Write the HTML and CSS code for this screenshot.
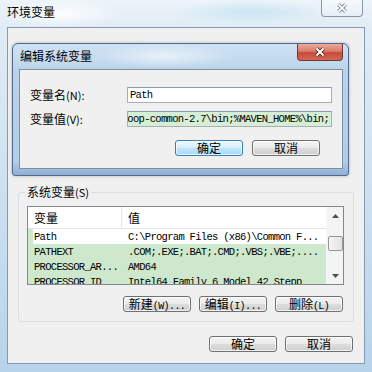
FILE: index.html
```html
<!DOCTYPE html>
<html lang="zh-CN">
<head>
    <meta charset="UTF-8">
    <title>环境变量</title>
    <link rel="stylesheet" href="styles.css">
</head>
<body>
<div class="win">
    <div class="win-bar">
        <span class="win-title">环境变量</span>
        <span class="close ghost">
            <svg width="12" height="10" viewBox="0 0 12 10"><path d="M2.5 1.5 L9.5 8.5 M9.5 1.5 L2.5 8.5" stroke="#6f7c8c" stroke-width="3.4"/><path d="M2.5 1.5 L9.5 8.5 M9.5 1.5 L2.5 8.5" stroke="#f6f8fa" stroke-width="1.8"/></svg>
        </span>
    </div>
    <div class="win-client">
        <!-- 编辑系统变量 -->
        <div class="dlg">
            <div class="dlg-bar">
                <span class="dlg-title">编辑系统变量</span>
                <span class="close red">
                    <svg width="12" height="10" viewBox="0 0 12 10"><path d="M2.5 1.5 L9.5 8.5 M9.5 1.5 L2.5 8.5" stroke="#4a1e19" stroke-width="3.6"/><path d="M2.5 1.5 L9.5 8.5 M9.5 1.5 L2.5 8.5" stroke="#fff" stroke-width="2"/></svg>
                </span>
            </div>
            <div class="dlg-client">
                <div class="field">
                    <span class="field-label">变量名<span class="acc">(N):</span></span>
                    <div class="edit"><span class="mono">Path</span></div>
                </div>
                <div class="field">
                    <span class="field-label">变量值<span class="acc">(V):</span></span>
                    <div class="edit sel"><span class="mono">oop-common-2.7\bin;%MAVEN_HOME%\bin;</span></div>
                </div>
                <div class="btns dlg-btns">
                    <button class="btn focus">确定</button>
                    <button class="btn">取消</button>
                </div>
            </div>
        </div>

        <!-- 系统变量 -->
        <div class="group">
            <span class="legend">系统变量<span class="acc">(S)</span></span>
            <div class="list">
                <div class="list-main">
                    <div class="list-head">
                        <span class="c1">变量</span>
                        <span class="c2">值</span>
                    </div>
                    <div class="row first"><span class="c1 mono">Path</span><span class="c2 mono">C:\Program Files (x86)\Common F...</span></div>
                    <div class="row"><span class="c1 mono">PATHEXT</span><span class="c2 mono">.COM;.EXE;.BAT;.CMD;.VBS;.VBE;....</span></div>
                    <div class="row"><span class="c1 mono">PROCESSOR_AR...</span><span class="c2 mono">AMD64</span></div>
                    <div class="row"><span class="c1 mono">PROCESSOR_ID</span><span class="c2 mono">Intel64 Family 6 Model 42 Stepp</span></div>
                </div>
                <div class="vscroll">
                    <span class="arrow"><svg width="7" height="4" viewBox="0 0 7 4"><path d="M0 4 L3.5 0 L7 4 Z" fill="#4d4d4d"/></svg></span>
                    <span class="thumb"></span>
                    <span class="arrow down"><svg width="7" height="4" viewBox="0 0 7 4"><path d="M0 0 L3.5 4 L7 0 Z" fill="#4d4d4d"/></svg></span>
                </div>
            </div>
            <div class="btns group-btns">
                <button class="btn">新建<span class="acc mono">(W)...</span></button>
                <button class="btn">编辑<span class="acc mono">(I)...</span></button>
                <button class="btn">删除<span class="acc mono">(L)</span></button>
            </div>
        </div>

        <div class="btns win-btns">
            <button class="btn">确定</button>
            <button class="btn">取消</button>
        </div>
    </div>
</div>
</body>
</html>
```

FILE: styles.css
```css
* {
    margin: 0;
    padding: 0;
    box-sizing: border-box;
}

body {
    width: 372px;
    height: 372px;
    overflow: hidden;
    font: 12px "Noto Sans CJK SC", sans-serif;
    color: #000;
    background: #d3e5f2;
}

.mono {
    font-family: "Liberation Mono", monospace;
    font-size: 10.5px;
    letter-spacing: -0.7px;
}

/* 外层窗口 */
.win {
    width: 372px;
    height: 372px;
    display: flex;
    flex-direction: column;
    padding: 0 7px 8px 7px;
    background:
        radial-gradient(ellipse 60px 14px at 60px 14px, rgba(255, 255, 255, 0.9), rgba(255, 255, 255, 0)),
        radial-gradient(ellipse 80px 12px at 250px 12px, rgba(190, 225, 240, 0.7), rgba(255, 255, 255, 0)),
        linear-gradient(180deg, #eef4f9 0, #e0ecf5 27px, #c9def0 60%, #b7d3ea 100%);
}

.win-bar {
    height: 27px;
    display: flex;
    justify-content: space-between;
    align-items: flex-start;
}

.win-title {
    padding-top: 4px;
    line-height: 16px;
    font-size: 12px;
}

.close {
    display: flex;
    align-items: center;
    justify-content: center;
    border-radius: 0 0 4px 4px;
}

.close.ghost {
    width: 42px;
    height: 17px;
    margin-right: 2px;
    border: 1px solid #8796a8;
    border-top: none;
    background: linear-gradient(180deg, rgba(255, 255, 255, 0.5), rgba(230, 238, 245, 0.6));
}

.close.red {
    width: 46px;
    height: 17px;
    border: 1px solid #6f3a33;
    border-top: none;
    background: linear-gradient(180deg, #eba99d 0, #dc7b6c 45%, #c9483a 55%, #d26a55 100%);
}

.win-client {
    flex: 1;
    border: 1px solid #8699ae;
    background: #f0f0f0;
    display: flex;
    flex-direction: column;
}

/* 编辑系统变量 */
.dlg {
    width: 337px;
    height: 133px;
    margin: 15px 0 0 4px;
    border: 1px solid #52698a;
    border-radius: 6px 6px 3px 3px;
    padding: 0 5px 6px 6px;
    display: flex;
    flex-direction: column;
    background:
        radial-gradient(ellipse 70px 12px at 150px 12px, rgba(235, 243, 250, 0.9), rgba(255, 255, 255, 0)),
        linear-gradient(180deg, #cfe2f3 0, #b9d2ea 30px, #b3cde6 90%, #8fb0d2 100%);
    box-shadow: 0 0 3px rgba(40, 60, 90, 0.35);
}

.dlg-bar {
    height: 25px;
    display: flex;
    justify-content: space-between;
    align-items: flex-start;
}

.dlg-title {
    padding: 4px 0 0 1px;
    line-height: 16px;
}

.dlg-client {
    height: 100px;
    border: 1px solid #7c90a7;
    background: #f0f0f0;
    padding: 17px 10px 0 10px;
    display: flex;
    flex-direction: column;
    gap: 8px;
}

.field {
    display: flex;
    align-items: center;
    height: 16px;
}

.field-label {
    width: 97px;
    line-height: 16px;
    white-space: nowrap;
}

.acc {
    font-size: 11px;
}

.edit {
    width: 205px;
    height: 16px;
    border: 1px solid #abadb3;
    border-top-color: #8e9aa6;
    background: #fff;
    overflow: hidden;
    white-space: nowrap;
    display: flex;
    align-items: center;
    padding: 0 2px;
    line-height: 14px;
}

.edit.sel {
    justify-content: flex-end;
    background: #d5eed6;
}

/* 按钮 */
.btns {
    display: flex;
    justify-content: flex-end;
}

.btn {
    width: 68px;
    height: 16px;
    border: 1px solid #707070;
    border-radius: 3px;
    background: linear-gradient(180deg, #f3f3f3 0, #ebebeb 50%, #dddddd 50%, #cfcfcf 100%);
    font: 12px "Noto Sans CJK SC", sans-serif;
    line-height: 14px;
    color: #000;
    box-shadow: inset 0 0 0 1px rgba(255, 255, 255, 0.7);
}

.btn .acc {
    font-size: 10px;
    letter-spacing: -0.6px;
}

.btn.focus {
    border-color: #3c7fb1;
    background: linear-gradient(180deg, #eaf6fd 0, #d9f0fc 50%, #bee6fd 50%, #a7d9f5 100%);
}

.dlg-btns {
    margin-top: 5px;
    padding-right: 12px;
    gap: 9px;
}

/* 系统变量 */
.group {
    position: relative;
    margin: 16px 10px 0 10px;
    border: 1px solid #d5dfe5;
    border-radius: 3px;
    padding: 13px 9px 9px 8px;
}

.legend {
    position: absolute;
    top: -9px;
    left: 6px;
    padding: 0 2px 0 2px;
    background: #f0f0f0;
    line-height: 16px;
}

.list {
    height: 79px;
    border: 1px solid #828790;
    background: #fff;
    display: flex;
}

.list-main {
    flex: 1;
    overflow: hidden;
}

.list-head {
    height: 22px;
    display: flex;
    align-items: center;
    border-bottom: 1px solid #e5e5e5;
}

.c1 {
    width: 94px;
    padding-left: 6px;
    flex-shrink: 0;
    white-space: nowrap;
    overflow: hidden;
}

.list-head .c1 {
    border-right: 1px solid #e5e5e5;
    line-height: 21px;
}

.c2 {
    padding-left: 6px;
    white-space: nowrap;
}

.row {
    height: 15px;
    display: flex;
    align-items: center;
    background: #cde8cd;
}

.row.first {
    background: #fff;
    box-shadow: inset 5px 0 0 #cde8cd;
}

.vscroll {
    width: 17px;
    background: #f3f3f3;
    border-left: 1px solid #f8f8f8;
    display: flex;
    flex-direction: column;
    align-items: center;
}

.arrow {
    height: 17px;
    display: flex;
    align-items: center;
    justify-content: center;
}

.arrow.down {
    margin-top: auto;
}

.thumb {
    width: 15px;
    height: 15px;
    margin-top: 12px;
    border: 1px solid #979797;
    border-radius: 2px;
    background: linear-gradient(90deg, #f5f5f5, #e2e2e2);
}

.group-btns {
    margin-top: 11px;
    margin-right: 1px;
    gap: 8px;
}

.win-btns {
    margin-top: 14px;
    padding-right: 11px;
    gap: 8px;
}
```
